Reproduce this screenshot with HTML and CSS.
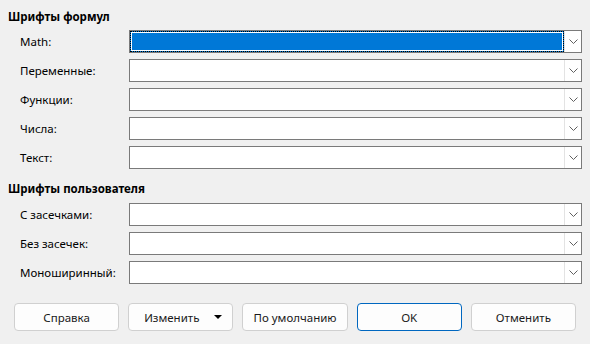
FILE: index.html
```html
<!DOCTYPE html>
<html lang="ru">
  <head>
    <meta charset="UTF-8" />
    <title>Шрифты</title>
    <link rel="stylesheet" href="styles.css">
  </head>
  <body>
    <div class="dialog">
      <!-- Formula fonts -->
      <div class="group-title">Шрифты формул</div>
      <div class="rows">
        <div class="row">
          <div class="label">Math:</div>
          <div class="combo focused">
            <div class="combo-value"><div class="focus-rect"></div></div>
            <div class="combo-drop"><svg width="9" height="5" viewBox="0 0 9 5"><path d="M0.5 0.5 L4.5 4.5 L8.5 0.5" fill="none" stroke="#606060" stroke-width="1"/></svg></div>
          </div>
        </div>
        <div class="row">
          <div class="label">Переменные:</div>
          <div class="combo">
            <div class="combo-value"></div>
            <div class="combo-drop"><svg width="9" height="5" viewBox="0 0 9 5"><path d="M0.5 0.5 L4.5 4.5 L8.5 0.5" fill="none" stroke="#606060" stroke-width="1"/></svg></div>
          </div>
        </div>
        <div class="row">
          <div class="label">Функции:</div>
          <div class="combo">
            <div class="combo-value"></div>
            <div class="combo-drop"><svg width="9" height="5" viewBox="0 0 9 5"><path d="M0.5 0.5 L4.5 4.5 L8.5 0.5" fill="none" stroke="#606060" stroke-width="1"/></svg></div>
          </div>
        </div>
        <div class="row">
          <div class="label">Числа:</div>
          <div class="combo">
            <div class="combo-value"></div>
            <div class="combo-drop"><svg width="9" height="5" viewBox="0 0 9 5"><path d="M0.5 0.5 L4.5 4.5 L8.5 0.5" fill="none" stroke="#606060" stroke-width="1"/></svg></div>
          </div>
        </div>
        <div class="row">
          <div class="label">Текст:</div>
          <div class="combo">
            <div class="combo-value"></div>
            <div class="combo-drop"><svg width="9" height="5" viewBox="0 0 9 5"><path d="M0.5 0.5 L4.5 4.5 L8.5 0.5" fill="none" stroke="#606060" stroke-width="1"/></svg></div>
          </div>
        </div>
      </div>

      <!-- User fonts -->
      <div class="group-title second">Шрифты пользователя</div>
      <div class="rows">
        <div class="row">
          <div class="label">С засечками:</div>
          <div class="combo">
            <div class="combo-value"></div>
            <div class="combo-drop"><svg width="9" height="5" viewBox="0 0 9 5"><path d="M0.5 0.5 L4.5 4.5 L8.5 0.5" fill="none" stroke="#606060" stroke-width="1"/></svg></div>
          </div>
        </div>
        <div class="row">
          <div class="label">Без засечек:</div>
          <div class="combo">
            <div class="combo-value"></div>
            <div class="combo-drop"><svg width="9" height="5" viewBox="0 0 9 5"><path d="M0.5 0.5 L4.5 4.5 L8.5 0.5" fill="none" stroke="#606060" stroke-width="1"/></svg></div>
          </div>
        </div>
        <div class="row">
          <div class="label">Моноширинный:</div>
          <div class="combo">
            <div class="combo-value"></div>
            <div class="combo-drop"><svg width="9" height="5" viewBox="0 0 9 5"><path d="M0.5 0.5 L4.5 4.5 L8.5 0.5" fill="none" stroke="#606060" stroke-width="1"/></svg></div>
          </div>
        </div>
      </div>

      <!-- Buttons -->
      <div class="buttons">
        <button class="btn">Справка</button>
        <button class="btn menu-btn"><span class="menu-text">Изменить</span><span class="caret"></span></button>
        <button class="btn">По умолчанию</button>
        <button class="btn default">OK</button>
        <button class="btn">Отменить</button>
      </div>
    </div>
  </body>
</html>
```

FILE: styles.css
```css
body {
  margin: 0;
  background-color: #f0f0f0;
  font-family: "Noto Sans", "Open Sans", sans-serif;
  font-size: 11.5px;
  color: #000;
}

.dialog {
  width: 590px;
  height: 344px;
  box-sizing: border-box;
  padding: 8px 8px 0 8px;
}

.group-title {
  font-weight: bold;
  line-height: 18px;
  margin-bottom: 4px;
}

.group-title.second {
  margin-top: 11px;
  margin-bottom: 5px;
}

.rows {
  display: flex;
  flex-direction: column;
  gap: 6px;
  padding-left: 12px;
}

.row {
  display: flex;
  align-items: center;
  height: 23px;
}

.label {
  width: 109px;
  flex-shrink: 0;
}

.combo {
  flex: 1;
  display: flex;
  height: 23px;
  box-sizing: border-box;
  border: 1px solid #7a7a7a;
  background-color: #fff;
}

.combo-value {
  flex: 1;
}

.combo.focused .combo-value {
  background-color: #0078d7;
  display: flex;
}

.focus-rect {
  flex: 1;
  border: 1px dotted #000;
  background-color: #0078d7;
  box-shadow: 0 0 0 1px #fff inset;
}

.combo-drop {
  width: 17px;
  box-sizing: border-box;
  border-left: 1px solid #e3e3e3;
  display: flex;
  align-items: center;
  justify-content: center;
}

.buttons {
  display: grid;
  grid-template-columns: repeat(5, 1fr);
  gap: 9px;
  margin-top: 19px;
  padding: 0 6px;
}

.btn {
  height: 28px;
  font-family: inherit;
  font-size: 11.5px;
  color: #1a1a1a;
  background-color: #fdfdfd;
  border: 1px solid #d0d0d0;
  border-radius: 4px;
  padding: 0;
}

.btn.default {
  border-color: #0067c0;
}

.menu-btn {
  display: flex;
  align-items: center;
  padding: 0 10px 0 0;
}

.menu-text {
  flex: 1;
  text-align: center;
}

.caret {
  width: 0;
  height: 0;
  border-left: 4px solid transparent;
  border-right: 4px solid transparent;
  border-top: 4px solid #000;
}
```
